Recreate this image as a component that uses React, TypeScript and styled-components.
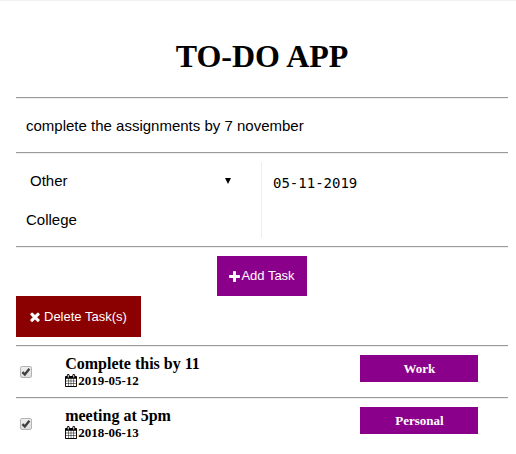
import React, { useState } from "react";
import styled, { createGlobalStyle } from "styled-components";

const sans = `"Liberation Sans", Arial, sans-serif`;
const serif = `"Liberation Serif", "Times New Roman", serif`;
const mono = `"DejaVu Sans Mono", monospace`;

const GlobalStyle = createGlobalStyle`
  *, *::before, *::after { box-sizing: border-box; }
  body { margin: 0; background: #fff; color: #000; font-family: ${serif}; }
`;

const Page = styled.main`
  border-top: 1px solid #f1f1f1;
  padding: 37px 8px 8px 16px;
`;

const Title = styled.h1`
  margin: 0 0 22px;
  font-size: 32px;
  line-height: 37px;
  font-weight: bold;
  text-align: center;
`;

const Rule = styled.hr`
  margin: 0;
  border: 0;
  height: 2px;
  border-top: 1px solid #9a9a9a;
  border-bottom: 1px solid #eee;
`;

const TaskInput = styled.input`
  display: block;
  width: 100%;
  height: 53px;
  padding: 0 10px;
  border: 0;
  outline: 0;
  background: transparent;
  color: #000;
  font: 15px/20px ${sans};
`;

const Details = styled.div`
  display: grid;
  grid-template-columns: 1fr 1fr;
  align-items: start;
  padding: 8px 0;
`;

const CategoryCell = styled.div`
  border-right: 1px solid #eee;
`;

const SelectWrap = styled.div`
  display: grid;
  grid-template-columns: 1fr 36px;
  align-items: center;
`;

const CategorySelect = styled.select`
  grid-area: 1 / 1 / 2 / 3;
  appearance: none;
  width: 100%;
  height: 38px;
  padding: 0 36px 0 14px;
  border: 0;
  outline: 0;
  background: transparent;
  color: #000;
  font: 15px/20px ${sans};
`;

const Arrow = styled.svg`
  grid-area: 1 / 2 / 2 / 3;
  width: 6px;
  height: 6px;
  pointer-events: none;
`;

const OtherInput = styled(TaskInput)`
  height: 38px;
`;

const DateInput = styled.input`
  width: 100%;
  height: 42px;
  padding: 0 11px;
  border: 0;
  outline: 0;
  background: transparent;
  color: #000;
  font: 14px/20px ${mono};
`;

const AddRow = styled.div`
  display: flex;
  justify-content: center;
  padding-top: 8px;
`;

const ActionButton = styled.button`
  display: flex;
  align-items: center;
  border: 0;
  color: #fff;
  font: 13px/16px ${sans};
  cursor: pointer;
`;

const AddButton = styled(ActionButton)`
  gap: 1px;
  height: 40px;
  padding: 0 12px;
  background: #8b008b;
`;

const DeleteButton = styled(ActionButton)`
  gap: 4px;
  height: 41px;
  padding: 0 14px;
  background: #8b0000;
`;

const DeleteRow = styled.div`
  display: flex;
  padding-bottom: 8px;
`;

const Icon = styled.svg<{ $width: number; $height: number }>`
  flex: none;
  width: ${(p) => p.$width}px;
  height: ${(p) => p.$height}px;
  fill: currentColor;
`;

const TaskList = styled.ul`
  margin: 0;
  padding: 0;
  list-style: none;
`;

const TaskRow = styled.div`
  display: grid;
  grid-template-columns: 10% 60% 24%;
  min-height: 50px;
  align-items: start;
  padding-top: 8px;
`;

const CheckWrap = styled.label`
  display: grid;
  grid-template-columns: 12px;
  padding: 11px 0 0 4px;
`;

const Check = styled.input`
  grid-area: 1 / 1;
  appearance: none;
  width: 12px;
  height: 12px;
  margin: 0;
  border: 1px solid #b4b4b4;
  border-radius: 2px;
  background: linear-gradient(#eee, #dedede);

  &:not(:checked) + svg { display: none; }
`;

const Tick = styled.svg`
  grid-area: 1 / 1;
  width: 12px;
  height: 12px;
  pointer-events: none;
`;

const TaskName = styled.div`
  font-size: 16px;
  line-height: 18px;
  font-weight: bold;
`;

const TaskDate = styled.div`
  display: flex;
  align-items: center;
  gap: 1px;
  font-size: 13px;
  line-height: 15px;
  font-weight: bold;
`;

const Tag = styled.div`
  height: 27px;
  background: #8b008b;
  color: #fff;
  font-size: 13px;
  line-height: 28px;
  font-weight: bold;
  text-align: center;
`;

const PLUS =
  "M1600 736v192q0 40-28 68t-68 28h-416v416q0 40-28 68t-68 28h-192q-40 0-68-28t-28-68v-416h-416q-40 0-68-28t-28-68v-192q0-40 28-68t68-28h416v-416q0-40 28-68t68-28h192q40 0 68 28t28 68v416h416q40 0 68 28t28 68z";
const TIMES =
  "M1490 1322q0 40-28 68l-136 136q-28 28-68 28t-68-28l-294-294-294 294q-28 28-68 28t-68-28l-136-136q-28-28-28-68t28-68l294-294-294-294q-28-28-28-68t28-68l136-136q28-28 68-28t68 28l294 294 294-294q28-28 68-28t68 28l136 136q28 28 28 68t-28 68l-294 294 294 294q28 28 28 68z";
const CALENDAR =
  "M192 1664h288v-288h-288v288zm352 0h320v-288h-320v288zm-352-352h288v-320h-288v320zm352 0h320v-320h-320v320zm-352-384h288v-288h-288v288zm736 736h320v-288h-320v288zm-384-736h320v-288h-320v288zm768 736h288v-288h-288v288zm-384-352h320v-320h-320v320zm-352-864v-288q0-13-9.5-22.5t-22.5-9.5h-64q-13 0-22.5 9.5t-9.5 22.5v288q0 13 9.5 22.5t22.5 9.5h64q13 0 22.5-9.5t9.5-22.5zm736 864h288v-320h-288v320zm-384-384h320v-288h-320v288zm384 0h288v-288h-288v288zm32-480v-288q0-13-9.5-22.5t-22.5-9.5h-64q-13 0-22.5 9.5t-9.5 22.5v288q0 13 9.5 22.5t22.5 9.5h64q13 0 22.5-9.5t9.5-22.5zm384-64v1280q0 52-38 90t-90 38h-1408q-52 0-90-38t-38-90v-1280q0-52 38-90t90-38h128v-96q0-66 47-113t113-47h64q66 0 113 47t47 113v96h384v-96q0-66 47-113t113-47h64q66 0 113 47t47 113v96h128q52 0 90 38t38 90z";

interface Task {
  id: number;
  name: string;
  date: string;
  category: string;
}

const TASKS: Task[] = [
  { id: 1, name: "Complete this by 11", date: "2019-05-12", category: "Work" },
  { id: 2, name: "meeting at 5pm", date: "2018-06-13", category: "Personal" },
];

interface GlyphProps {
  path: string;
  box: string;
  width: number;
  height: number;
}

function Glyph({ path, box, width, height }: GlyphProps) {
  return (
    <Icon $width={width} $height={height} viewBox={box} aria-hidden="true">
      <path d={path} />
    </Icon>
  );
}

function TaskItem({ task }: { task: Task }) {
  const [checked, setChecked] = useState(true);
  return (
    <li>
      <Rule />
      <TaskRow>
        <CheckWrap>
          <Check
            type="checkbox"
            aria-label={task.name}
            checked={checked}
            onChange={(e) => setChecked(e.target.checked)}
          />
          <Tick viewBox="0 0 12 12" aria-hidden="true">
            <path d="M2.4 6.2 4.8 8.4 9.4 2.8" fill="none" stroke="#404040" strokeWidth="2.4" />
          </Tick>
        </CheckWrap>
        <div>
          <TaskName>{task.name}</TaskName>
          <TaskDate>
            <Glyph path={CALENDAR} box="64 0 1664 1792" width={12} height={13} />
            {task.date}
          </TaskDate>
        </div>
        <Tag>{task.category}</Tag>
      </TaskRow>
    </li>
  );
}

export default function App() {
  const [text, setText] = useState("complete the assignments by 7 november");
  const [category, setCategory] = useState("Other");
  const [other, setOther] = useState("College");
  const [date, setDate] = useState("05-11-2019");

  return (
    <>
      <GlobalStyle />
      <Page>
        <Title>TO-DO APP</Title>
        <Rule />
        <TaskInput aria-label="Task" value={text} onChange={(e) => setText(e.target.value)} />
        <Rule />
        <Details>
          <CategoryCell>
            <SelectWrap>
              <CategorySelect
                aria-label="Category"
                value={category}
                onChange={(e) => setCategory(e.target.value)}
              >
                <option>Work</option>
                <option>Personal</option>
                <option>Other</option>
              </CategorySelect>
              <Arrow viewBox="0 0 6 6" aria-hidden="true">
                <path d="M0 0h6L3 6z" />
              </Arrow>
            </SelectWrap>
            <OtherInput
              aria-label="Other category"
              value={other}
              onChange={(e) => setOther(e.target.value)}
            />
          </CategoryCell>
          <DateInput aria-label="Due date" value={date} onChange={(e) => setDate(e.target.value)} />
        </Details>
        <Rule />
        <AddRow>
          <AddButton type="button">
            <Glyph path={PLUS} box="192 128 1408 1408" width={11} height={11} />
            Add Task
          </AddButton>
        </AddRow>
        <DeleteRow>
          <DeleteButton type="button">
            <Glyph path={TIMES} box="302 302 1188 1252" width={10} height={10} />
            Delete Task(s)
          </DeleteButton>
        </DeleteRow>
        <TaskList>
          {TASKS.map((task) => (
            <TaskItem key={task.id} task={task} />
          ))}
        </TaskList>
      </Page>
    </>
  );
}
